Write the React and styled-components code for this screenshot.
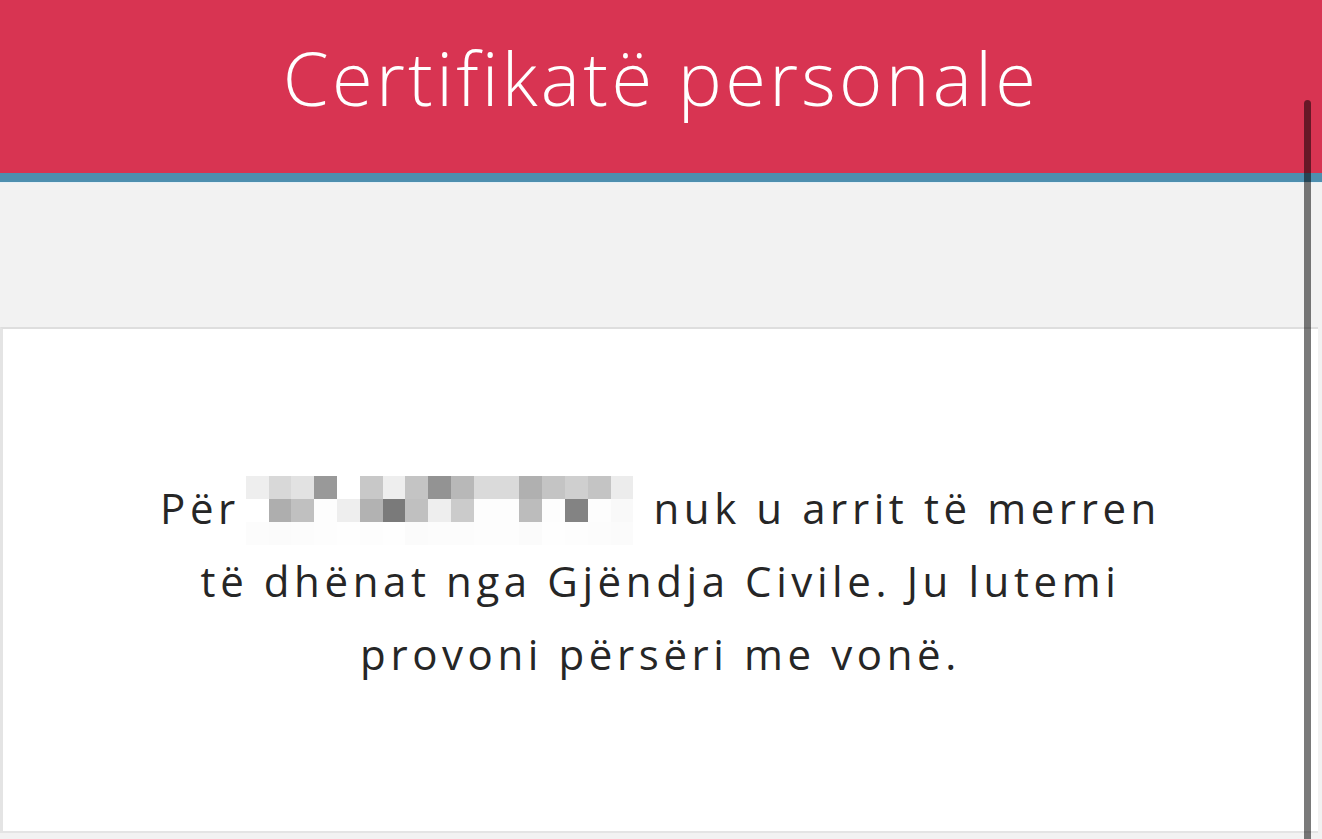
import React from 'react';
import styled, { createGlobalStyle } from 'styled-components';

const GlobalStyle = createGlobalStyle`
  html, body {
    margin: 0;
    padding: 0;
    background: #f2f2f2;
    overflow: hidden;
  }
  body {
    font-family: 'Open Sans', 'Noto Sans', sans-serif;
  }
`;

const mosaic = [
  ['#eeeeee', '#d8d8d8', '#e2e2e2', '#999999', '#ffffff', '#c8c8c8', '#eeeeee', '#c4c4c4', '#939393', '#b8b8b8', '#dadada', '#dadada', '#b0b0b0', '#c4c4c4', '#cfcfcf', '#c4c4c4', '#ececec'],
  ['#ffffff', '#aeaeae', '#c0c0c0', '#fdfdfd', '#eeeeee', '#b2b2b2', '#7a7a7a', '#c0c0c0', '#eeeeee', '#cbcbcb', '#fdfdfd', '#fdfdfd', '#bcbcbc', '#fdfdfd', '#838383', '#fdfdfd', '#f9f9f9'],
  ['#fcfcfc', '#fbfbfb', '#fcfcfc', '#fdfdfd', '#fefefe', '#fdfdfd', '#fefefe', '#fbfbfb', '#fcfcfc', '#fcfcfc', '#fdfdfd', '#fdfdfd', '#fbfbfb', '#fefefe', '#fdfdfd', '#fcfcfc', '#fbfbfb'],
];

const App = () => {
  return (
    <>
      <GlobalStyle />
      <Page>
        <Header>
          <Title>Certifikatë personale</Title>
        </Header>
        <Spacer />
        <Card>
          <Message>
            Për
            <Redacted aria-label="redacted">
              {mosaic.map((row, r) =>
                row.map((c, i) => <Tile key={`${r}-${i}`} $color={c} />)
              )}
            </Redacted>
            nuk u arrit të merren
            <br />
            të dhënat nga Gjëndja Civile. Ju lutemi
            <br />
            provoni përsëri me vonë.
          </Message>
        </Card>
        <ScrollThumb />
      </Page>
    </>
  );
};

export default App;

const Page = styled.div`
  position: relative;
  width: 1322px;
  height: 839px;
  background: #f2f2f2;
  display: flex;
  flex-direction: column;
  overflow: hidden;
`;

const Header = styled.header`
  height: 182px;
  background: #d83452;
  border-bottom: 9px solid #4e8faf;
  box-shadow: 0 1px 0 #e6f0f6;
  display: flex;
  align-items: center;
  justify-content: center;
  padding-bottom: 18px;
  box-sizing: border-box;
  flex-shrink: 0;
`;

const Title = styled.h1`
  margin: 0;
  color: #ffffff;
  font-family: 'Open Sans', 'Noto Sans', sans-serif;
  font-weight: 350;
  font-size: 74px;
  letter-spacing: 3.3px;
  line-height: 1;
`;

const Spacer = styled.div`
  height: 145px;
  flex-shrink: 0;
`;

const Card = styled.section`
  height: 506px;
  margin: 0 4px 0 0;
  background: #ffffff;
  border-top: 2px solid #dedede;
  border-left: 3px solid #e4e4e4;
  border-bottom: 2px solid #e4e4e4;
  box-sizing: border-box;
  display: flex;
  align-items: center;
  justify-content: center;
  flex-shrink: 0;
`;

const Message = styled.p`
  margin: 0;
  text-align: center;
  color: #262626;
  font-family: 'Open Sans', 'Noto Sans', sans-serif;
  font-size: 42px;
  letter-spacing: 4.6px;
  line-height: 73px;
  font-weight: 400;
`;

const Redacted = styled.span`
  display: inline-grid;
  grid-template-columns: repeat(17, 22.8px);
  grid-auto-rows: 23px;
  vertical-align: middle;
  margin: -14px 20px 0 6px;
  position: relative;
  top: 5px;
`;

const Tile = styled.span`
  background: ${(p) => p.$color};
`;

const ScrollThumb = styled.div`
  position: absolute;
  left: 1304px;
  top: 100px;
  bottom: 0;
  width: 7px;
  border-radius: 4px 4px 0 0;
  background: rgba(0, 0, 0, 0.52);
`;
